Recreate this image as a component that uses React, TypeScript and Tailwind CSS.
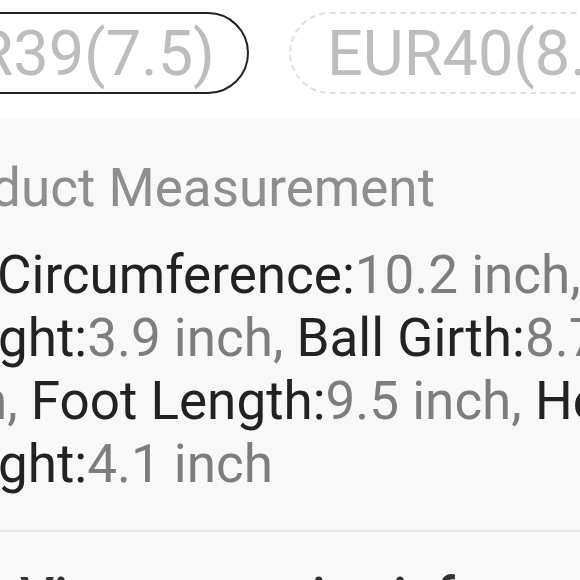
export default function App() {
  return (
    <div className="flex h-[580px] w-[580px] flex-col overflow-hidden bg-white font-['Roboto',sans-serif]">
      <div className="flex h-[118px] shrink-0 items-start gap-[40px] pt-[12px]">
        <div className="ml-[-58px] flex h-[82px] w-[307px] shrink-0 items-center justify-end rounded-full border-2 border-[#222] pr-[32px]">
          <span className="whitespace-nowrap text-[63px] leading-none text-[#bdbdbd]">
            EUR39(7.5)
          </span>
        </div>
        <div className="flex h-[82px] shrink-0 items-center rounded-full border-2 border-dashed border-[#e0e0e0] pl-[36px] pr-[36px]">
          <span className="whitespace-nowrap text-[63px] leading-none text-[#bdbdbd]">
            EUR40(8.5)
          </span>
        </div>
      </div>

      <div className="flex flex-1 flex-col bg-[#f8f8f8]">
        <div className="ml-[-90px] mt-[39px] whitespace-nowrap text-[53px] leading-[63px] text-[#8e8e8e]">
          Product Measurement
        </div>
        <div className="mt-[24px] flex flex-col whitespace-nowrap text-[53px] leading-[63px]">
          <div className="ml-[-3px]">
            <span className="text-[#222]">Circumference:</span>
            <span className="text-[#7d7d7d]">10.2 inch, </span>
            <span className="text-[#222]">Heel</span>
          </div>
          <div className="ml-[-2px]">
            <span className="text-[#222]">ght:</span>
            <span className="text-[#7d7d7d]">3.9 inch, </span>
            <span className="text-[#222]">Ball Girth:</span>
            <span className="text-[#7d7d7d]">8.7 inch,</span>
          </div>
          <div className="ml-[-22px]">
            <span className="text-[#7d7d7d]">h, </span>
            <span className="text-[#222]">Foot Length:</span>
            <span className="text-[#7d7d7d]">9.5 inch, </span>
            <span className="text-[#222]">Heel</span>
          </div>
          <div className="ml-[-2px]">
            <span className="text-[#222]">ght:</span>
            <span className="text-[#7d7d7d]">4.1 inch</span>
          </div>
        </div>
        <div className="mt-[34px] h-[2px] shrink-0 bg-[#e8e8e8]" />
        <div className="mt-[34px] whitespace-nowrap pl-[20px] text-[53px] font-medium leading-[63px] text-[#333]">
          View more size info
        </div>
      </div>
    </div>
  );
}
